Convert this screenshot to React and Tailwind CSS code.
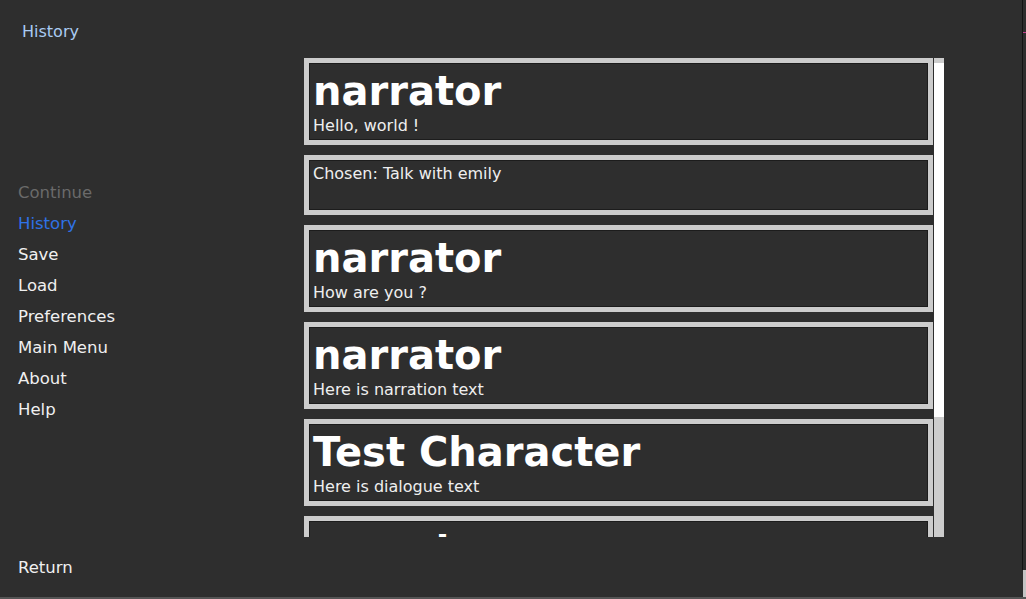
import React from 'react';

const menu = [
  { label: 'Continue', tone: 'text-[#6a6a6a]' },
  { label: 'History', tone: 'text-[#2f72e6]' },
  { label: 'Save', tone: 'text-[#f0f0f0]' },
  { label: 'Load', tone: 'text-[#f0f0f0]' },
  { label: 'Preferences', tone: 'text-[#f0f0f0]' },
  { label: 'Main Menu', tone: 'text-[#f0f0f0]' },
  { label: 'About', tone: 'text-[#f0f0f0]' },
  { label: 'Help', tone: 'text-[#f0f0f0]' },
];

const entries = [
  { id: 1, who: 'narrator', what: 'Hello, world !' },
  { id: 2, choice: 'Chosen: Talk with emily' },
  { id: 3, who: 'narrator', what: 'How are you ?' },
  { id: 4, who: 'narrator', what: 'Here is narration text' },
  { id: 5, who: 'Test Character', what: 'Here is dialogue text' },
  { id: 6, who: 'narrator', what: 'Here is narration text' },
];

const Entry = ({ entry }) => {
  if (entry.choice) {
    return (
      <div className="shrink-0 h-[60px] border-[5px] border-[#cccccc]">
        <div className="h-full border border-[#1c1c1c] px-[3px] pt-[3px]">
          <p className="text-[16px] leading-[19px] text-[#eeeeee]">{entry.choice}</p>
        </div>
      </div>
    );
  }
  return (
    <div className="shrink-0 h-[87px] border-[5px] border-[#cccccc]">
      <div className="h-full border border-[#1c1c1c] px-[3px] pt-[3px] overflow-hidden">
        <p className="text-[40px] leading-[49px] font-bold text-white whitespace-nowrap">{entry.who}</p>
        <p className="text-[16px] leading-[19px] text-[#eeeeee]">{entry.what}</p>
      </div>
    </div>
  );
};

export default function App() {
  return (
    <div
      className="relative w-[1026px] h-[599px] overflow-hidden bg-[#2e2e2e] flex"
      style={{ fontFamily: '"DejaVu Sans", sans-serif' }}
    >
      {/* navigation column */}
      <div className="w-[304px] shrink-0 flex flex-col">
        <p className="pl-[22px] pt-[22px] text-[16px] leading-[19px] text-[#aacbf2]">History</p>
        <nav className="mt-[136px] flex flex-col pl-[18px]">
          {menu.map((item) => (
            <span key={item.label} className={`h-[31px] text-[16.5px] leading-[31px] ${item.tone}`}>
              {item.label}
            </span>
          ))}
        </nav>
        <span className="mt-[127px] pl-[18px] h-[31px] text-[16.5px] leading-[31px] text-[#f0f0f0]">Return</span>
      </div>

      {/* history log */}
      <div className="pt-[58px]">
        <div className="w-[640px] h-[479px] flex gap-px">
          <div className="w-[629px] h-full overflow-hidden flex flex-col gap-[10px]">
            {entries.map((entry) => (
              <Entry key={entry.id} entry={entry} />
            ))}
          </div>
          <div className="w-[10px] h-full bg-[#cccccc] pt-[5px]">
            <div className="h-[354px] bg-white" />
          </div>
        </div>
      </div>

      {/* window edge */}
      <div className="absolute left-[1022px] top-0 w-px h-[570px] bg-[#141414]" />
      <div className="absolute left-[1023px] top-[32px] w-[3px] h-px bg-[#c0408a]" />
      <div className="absolute left-[1023px] top-[570px] w-[3px] h-[27px] bg-[#c4c4c4]" />
      <div className="absolute left-0 top-[597px] w-full h-[2px] bg-[#555555]" />
    </div>
  );
}
